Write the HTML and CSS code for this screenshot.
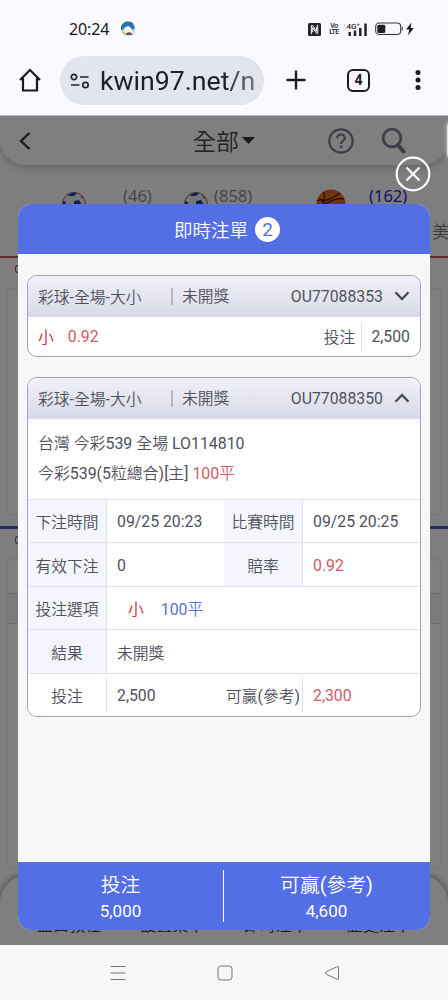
FILE: index.html
```html
<!DOCTYPE html>
<html lang="zh-Hant">
<head>
<meta charset="utf-8">
<title>即時注單</title>
<link rel="stylesheet" href="styles.css">
</head>
<body>
<div class="phone">
  <div class="status">
    <span class="clock">20:24</span>
    <svg class="avatar" width="16" height="16" viewBox="0 0 16 16"><circle cx="8" cy="8" r="7.2" fill="#b9dcee"/><path d="M1 6C2 1 8-1 13 2l2 5-3 2-3-4-4 3-4 1z" fill="#2777ad"/><path d="M4 7l4-2 4 3v4l-3 2-4-2z" fill="#fff0df"/><path d="M6 12l4-1 3 3H6z" fill="#7b5145"/><path d="M2 10l3 2-1 2z" fill="#e9a25f"/></svg>
    <svg class="nfc" width="13" height="13" viewBox="0 0 13 13"><rect width="13" height="13" rx="1.5" fill="#242428"/><path d="M3.400 11.200V2.500H4.500L8.400 8.300V3.800M9.700 1.800V10.500H8.600L4.700 4.700V9.200" fill="none" stroke="#faf9ff" stroke-width="1"/></svg>
    <span class="volte"><span>Vo</span><span>LTE</span></span>
    <svg class="signal" width="25" height="15" viewBox="0 0 25 15"><path d="M.5 4l1-1.500L2.500 4M.5 6l1 1.500L2.500 6" fill="none" stroke="#c8c8ce"/><text x="3.500" y="7" class="gen">4G⁺</text><path d="M6.700 10v4M12 8.500V14M17.300 6v8M22.500 1.500V14" stroke="#242428" stroke-width="2.500"/></svg>
    <svg class="battery" width="39" height="14" viewBox="0 0 39 14"><rect x=".7" y="1" width="25" height="11.500" rx="3.500" fill="none" stroke="#36363a" stroke-width="1.100"/><rect x="2.300" y="2.700" width="8" height="8.200" rx="1.500" fill="#202024"/><path d="M27.300 5v3.600" stroke="#555" stroke-width="1.200"/><path d="M36.500.5L31 7.500h3.300L33 13.500 38.800 6h-3.300z" fill="#18181b"/></svg>
  </div>
  <div class="browser">
    <svg class="home" width="24" height="26" viewBox="0 0 24 26"><path d="M2 13L12 3l10 10M5 11v12.500h14V11" fill="none" stroke="#1b1b20" stroke-width="2.200"/></svg>
    <div class="omnibox">
      <svg width="20" height="16" viewBox="0 0 20 16"><g fill="none" stroke="#23242b" stroke-width="1.700"><circle cx="4" cy="4" r="2.700"/><path d="M10 4h8.500M1 12h8.500"/><circle cx="15.500" cy="12" r="2.700"/></g></svg>
      <span class="url">kwin97.net/n</span>
    </div>
    <svg class="plus" width="20" height="20" viewBox="0 0 20 20"><path d="M10 .5v19M.5 10h19" stroke="#1b1b20" stroke-width="2.300"/></svg>
    <span class="tabs">4</span>
    <svg class="dots" width="6" height="22" viewBox="0 0 6 22"><g fill="#1b1b20"><circle cx="3" cy="3.500" r="2.500"/><circle cx="3" cy="11" r="2.500"/><circle cx="3" cy="18.500" r="2.500"/></g></svg>
  </div>

  <div class="page">
    <div class="topbar">
      <svg class="back" width="12" height="20" viewBox="0 0 12 20"><path d="M10.500 2L2 10l8.500 8" fill="none" stroke="#333" stroke-width="2.400"/></svg>
      <span class="title">全部</span>
      <svg class="caret" width="13" height="7" viewBox="0 0 13 7"><path d="M0 0h13L6.500 7z" fill="#333"/></svg>
      <svg class="help" width="26" height="26" viewBox="0 0 26 26"><circle cx="13" cy="13" r="11.700" fill="none" stroke="#777d90" stroke-width="2.200"/><path d="M9.200 10.200c0-5 7.600-4.800 7.600-.3 0 3-3.800 3-3.800 6" fill="none" stroke="#777d90" stroke-width="2.200"/><circle cx="13" cy="18.700" r="1.500" fill="#777d90"/></svg>
      <svg class="search" width="25" height="27" viewBox="0 0 25 27"><circle cx="11" cy="11" r="8.900" fill="none" stroke="#777d90" stroke-width="2.700"/><path d="M17 18l5.500 6.500" stroke="#777d90" stroke-width="4" stroke-linecap="round"/></svg>
    </div>
    <div class="sports">
      <svg class="ball" width="24" height="24" viewBox="0 0 24 24"><circle cx="12" cy="12" r="11.500" fill="#eee" stroke="#995b5b"/><path d="M6 3q5-3 9-2l-3 3H7zM12 9l5-1 3 5-4 3-4-3zM1 9l3 1-1 5-2-2z" fill="#173eb2"/><path d="M18 3l3 3-1 1z" fill="#a73b2d"/></svg>
      <span class="count">(46)</span>
      <svg class="ball" width="24" height="24" viewBox="0 0 24 24"><circle cx="12" cy="12" r="11.500" fill="#eee" stroke="#995b5b"/><path d="M6 3q5-3 9-2l-3 3H7zM12 9l5-1 3 5-4 3-4-3zM1 9l3 1-1 5-2-2z" fill="#173eb2"/><path d="M18 3l3 3-1 1z" fill="#a73b2d"/></svg>
      <span class="count">(858)</span>
      <svg class="basket" width="30" height="30" viewBox="0 0 30 30"><circle cx="15" cy="15" r="14.500" fill="#dc6b1c"/><path d="M7 3q4 4-2 16M5 12Q13 12 24 4M10 15Q20 8 28 10M1 12q7-4 8 3" fill="none" stroke="#401808" stroke-width="1.200"/></svg>
      <span class="count active">(162)</span>
    </div>
    <div class="leagues"><span>美</span></div>
    <div class="strip red"><span class="mark"></span></div>
    <div class="panel first"></div>
    <div class="strip blue"><span class="mark"></span></div>
    <div class="panel second"><div class="band"></div></div>
    <div class="bottombar"><span>盤口教程</span><span>設置菜單</span><span>即時注單</span><span>歷史注單</span></div>
    <div class="shade"></div>
    <div class="drawer-handle"></div>

    <div class="dialog">
      <div class="dialog-head"><span>即時注單</span><span class="badge">2</span></div>
      <div class="dialog-body">
        <div class="bet">
          <div class="bet-head">
            <span class="kind">彩球-全場-大小</span><span class="state">未開獎</span><span class="number">OU77088353</span>
            <svg width="16" height="10" viewBox="0 0 16 10"><path d="M1.500 1.300L8 8l6.500-6.700" fill="none" stroke="#484a58" stroke-width="2.300"/></svg>
          </div>
          <div class="summary"><span class="pick">小</span><span class="odds">0.92</span><span class="label">投注</span><span class="stake">2,500</span></div>
        </div>
        <div class="bet">
          <div class="bet-head">
            <span class="kind">彩球-全場-大小</span><span class="state">未開獎</span><span class="number">OU77088350</span>
            <svg width="16" height="10" viewBox="0 0 16 10"><path d="M1.500 8.700L8 2l6.500 6.700" fill="none" stroke="#484a58" stroke-width="2.300"/></svg>
          </div>
          <div class="match"><div>台灣 今彩539 全場 LO114810</div><div>今彩539(5粒總合)[主] <span class="odds">100平</span></div></div>
          <div class="row"><span class="th">下注時間</span><span class="td">09/25 20:23</span><span class="th">比賽時間</span><span class="td">09/25 20:25</span></div>
          <div class="row"><span class="th">有效下注</span><span class="td">0</span><span class="th">賠率</span><span class="td odds">0.92</span></div>
          <div class="row wide"><span class="th">投注選項</span><span class="td option"><span class="pick">小</span><span class="line">100平</span></span></div>
          <div class="row wide"><span class="th">結果</span><span class="td">未開獎</span></div>
          <div class="row total"><span class="th">投注</span><span class="td">2,500</span><span class="th">可贏(參考)</span><span class="td odds">2,300</span></div>
        </div>
      </div>
      <div class="dialog-foot">
        <div class="sum"><span class="sum-label">投注</span><span class="sum-value">5,000</span></div>
        <div class="sum"><span class="sum-label">可贏(參考)</span><span class="sum-value">4,600</span></div>
      </div>
    </div>
    <svg class="close" width="36" height="36" viewBox="0 0 36 36"><circle cx="18" cy="18" r="16.300" fill="none" stroke="#fff" stroke-width="2.200"/><path d="M11.500 11.500l13 13M24.500 11.500l-13 13" stroke="#fff" stroke-width="2.200"/></svg>
  </div>

  <div class="sysnav">
    <svg width="16" height="16" viewBox="0 0 16 16"><path d="M.5 1.500h15M.5 8h15M.5 14.500h15" stroke="#777" stroke-width="1"/></svg>
    <svg width="16" height="16" viewBox="0 0 16 16"><rect x="1" y="1" width="14" height="14" rx="3" fill="none" stroke="#777"/></svg>
    <svg width="16" height="16" viewBox="0 0 16 16"><path d="M14.500 2v12q0 1-1 .5L2 9Q.8 8 2 7l11.500-5.500q1-.5 1 .5z" fill="none" stroke="#777"/></svg>
  </div>
</div>
</body>
</html>
```
FILE: styles.css
```css
* { box-sizing: border-box; }
body { margin: 0; font-family: Roboto, "Noto Sans CJK TC DemiLight", "Noto Sans CJK TC", sans-serif; color: #50515e; }
svg { display: block; flex: none; }
.phone { width: 448px; height: 1000px; overflow: hidden; display: flex; flex-direction: column; background: #faf9ff; }

.status { height: 56px; padding-top: 2px; display: flex; align-items: center; color: #18181b; }
.clock { width: 51px; margin-left: 69px; font: 450 16px "Noto Sans", sans-serif; letter-spacing: -.1px; }
.nfc { margin-left: 172px; }
.volte { width: 10px; margin-left: 8px; display: flex; flex-direction: column; font: 500 7px/6.500px Roboto, sans-serif; letter-spacing: -.5px; align-items: center; }
.signal { margin-left: 4px; }
.gen { font: 500 8px Roboto, sans-serif; fill: #242428; }
.battery { margin-left: 7px; }

.browser { height: 60px; padding-bottom: 11px; display: flex; align-items: center; border-bottom: 1px solid #bcbcc2; }
.home { margin-left: 18px; }
.omnibox { width: 204px; height: 49px; margin-left: 18px; padding: 2px 9px 0 10px; border-radius: 25px; background: #e2e4f0; display: flex; align-items: center; gap: 10px; }
.url { width: 155px; overflow: hidden; white-space: nowrap; font-size: 26.700px; line-height: 40px; color: #202127; -webkit-mask-image: linear-gradient(to right, #000 80%, rgba(0,0,0,.55)); mask-image: linear-gradient(to right, #000 80%, rgba(0,0,0,.55)); }
.plus { margin-left: 22px; }
.tabs { width: 23px; height: 23px; margin-left: 41px; border: 2px solid #1b1b20; border-radius: 6px; font-size: 14px; font-weight: 700; line-height: 19px; text-align: center; color: #1b1b20; }
.dots { margin-left: 45px; }

.page { position: relative; height: 829px; flex: none; overflow: hidden; background: #fcfcfd; display: flex; flex-direction: column; }
.topbar { height: 49px; flex: none; display: flex; align-items: center; background: #fff; border-radius: 0 0 26px 26px; box-shadow: 0 3px 7px rgba(0,0,0,.2); }
.back { margin-left: 19px; }
.title { margin: -2px 0 0 162px; width: 47px; font-size: 23px; color: #444; }
.caret { margin-left: 2px; }
.help { margin-left: 73px; }
.search { margin-left: 27px; }
.sports { height: 60px; padding-top: 18px; flex: none; display: flex; align-items: flex-start; }
.ball { margin: 9px 0 0 62px; }
.count { width: 30px; margin-left: 37px; font: 16.500px/25px "Noto Sans", sans-serif; color: #888d99; white-space: nowrap; }
.count + .ball { margin-left: 31px; }
.ball + .count + .ball + .count { margin-left: 6px; width: 40px; }
.basket { margin: 6px 0 0 62px; }
.count.active { margin-left: 23px; color: #2424d8; }
.leagues { height: 33px; flex: none; border-bottom: 2px solid #cf5548; display: flex; padding: 0 0 0 432px; font-size: 17px; line-height: 14px; color: #777; }
.strip { height: 30px; padding: 7px 0 0 15px; flex: none; }
.mark { display: block; width: 8px; height: 8px; border: 1.500px solid currentColor; border-right: 0; border-radius: 3px 0 0 3px; }
.red { color: #b85048; }
.panel { margin: 0 7px; flex: none; background: #fff; border: 1px solid #ececf2; border-radius: 4px; }
.first { height: 227px; }
.blue { height: 33px; margin-top: 11px; border-top: 3px solid #465bc8; color: #5b58b8; }
.second { height: 310px; padding-top: 33px; }
.band { height: 31px; border: solid #d5daea; border-width: 1px 0; background: #f4f6ff; }
.bottombar { position: absolute; left: 0; right: 0; bottom: 0; height: 70px; padding: 39px 37px 0; display: flex; justify-content: space-between; background: #fff; border-radius: 28px 28px 0 0; box-shadow: 0 0 5px 2px rgba(80,80,110,.4); font-size: 16px; line-height: 24px; color: #333; }
.shade { position: absolute; inset: 0; background: rgba(0,0,0,.5); }
.drawer-handle { position: absolute; right: -10px; top: 5px; width: 11px; height: 38px; border-radius: 6px; background: #ddd; box-shadow: 0 0 4px #ccc; }

.dialog { position: absolute; left: 18px; top: 88px; width: 412px; height: 726px; display: flex; flex-direction: column; border-radius: 14px; overflow: hidden; background: #f7f7f8; }
.dialog-head { height: 50px; flex: none; display: flex; align-items: center; justify-content: center; gap: 7px; padding-left: 6px; background: #546ee6; color: #fff; font-size: 18.500px; }
.badge { width: 25px; height: 25px; border-radius: 50%; background: #fff; color: #546ee6; font-size: 19px; line-height: 26px; text-align: center; }
.dialog-body { flex: 1; padding: 21px 9px 0; display: flex; flex-direction: column; gap: 20px; font-size: 15.800px; }
.bet { border: 1px solid #a0a1be; border-radius: 10px; overflow: hidden; background: #fff; }
.bet-head { height: 40.500px; padding: 1px 10px 0; display: flex; align-items: center; background: linear-gradient(#f0f1f8, #d9dae8); border-bottom: 1px solid #dcdde6; }
.kind { width: 133px; }
.state { height: 17px; padding-left: 9px; border-left: 2px solid #b5b6c3; line-height: 17px; flex: 1; }
.number { margin-right: 11px; }
.summary { height: 39.500px; padding: 0 10px; display: flex; align-items: center; }
.pick { color: #c9202c; }
.odds { color: #d05a69; }
.summary .odds { flex: 1; margin-left: 14px; }
.stake { height: 29px; margin-left: 6px; padding-left: 9px; border-left: 1px solid #dfdfe9; line-height: 29px; }
.match { height: 80px; padding: 10px 10px 0; font-size: 15.900px; line-height: 30px; }
.row { height: 43.500px; display: grid; grid-template-columns: 78px 118px 78px 1fr; border-top: 1px solid #dfe1ee; }
.row.wide { grid-template-columns: 78px 1fr; }
.th, .td { padding-top: 2px; display: flex; align-items: center; white-space: nowrap; }
.th { justify-content: center; background: #f5f6fd; }
.td { padding-left: 10px; border-left: 1px solid #dfe1ee; }
.option { padding-left: 21px; gap: 17px; }
.line { color: #5872cf; }
.total .th { background: #fff; }
.total .td { margin: 4px 0; }
.dialog-foot { height: 68px; flex: none; display: flex; background: #546ee6; color: #fff; padding: 8px 1px 8px 0; }
.sum { flex: 1; display: flex; flex-direction: column; align-items: center; }
.sum + .sum { border-left: 1px solid #fff; }
.sum-label { font-size: 19.800px; line-height: 31px; }
.sum-value { font-size: 17px; line-height: 20px; }
.close { position: absolute; left: 395px; top: 40px; }

.sysnav { height: 55px; flex: none; padding-left: 2px; background: #f7f7f8; display: flex; align-items: center; justify-content: center; gap: 91px; }
```
